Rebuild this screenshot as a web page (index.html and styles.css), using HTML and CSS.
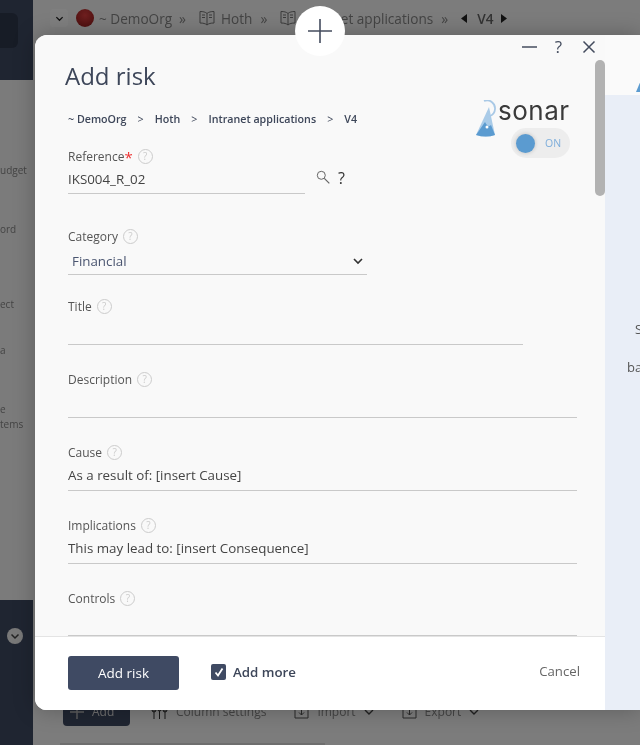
FILE: index.html
```html
<!DOCTYPE html>
<html lang="en">
<head>
<meta charset="utf-8">
<title>Add risk</title>
<link rel="stylesheet" href="styles.css">
</head>
<body>
<div class="page">
  <aside class="sidebar">
    <div class="side-top"><div class="side-block"></div></div>
    <div class="side-menu">
      <span class="m1">udget</span>
      <span class="m2">ord</span>
      <span class="m3">ect</span>
      <span class="m4">a</span>
      <span class="m5">e</span>
      <span class="m6">tems</span>
    </div>
    <div class="side-bottom"><span class="side-round"><svg width="10" height="10" viewBox="0 0 10 10"><path d="M1.500 3.500 5 7l3.500-3.500" fill="none" stroke="#444" stroke-width="1.500"/></svg></span></div>
  </aside>
  <main class="content">
    <nav class="path">
      <span class="path-btn"><svg width="9" height="9" viewBox="0 0 10 10"><path d="M1.500 3.500 5 7l3.500-3.500" fill="none" stroke="#222" stroke-width="1.400"/></svg></span>
      <span class="avatar"></span>
      <span>~ DemoOrg</span><span class="sep sep-first">»</span>
      <svg class="book" width="16" height="16" viewBox="0 0 16 16"><path d="M8 3.500C6.500 2 4 1.500 1 1.500v11.500c3 0 5.500 .5 7 2 1.500-1.500 4-2 7-2V1.500c-3 0-5.500 .5-7 2zM8 3.500V15M3 5h3M3 7.500h3M10 5h3M10 7.500h3" fill="none" stroke="#777" stroke-width="1"/></svg>
      <span>Hoth</span><span class="sep">»</span>
      <svg class="book" width="16" height="16" viewBox="0 0 16 16"><path d="M8 3.500C6.500 2 4 1.500 1 1.500v11.500c3 0 5.500 .5 7 2 1.500-1.500 4-2 7-2V1.500c-3 0-5.500 .5-7 2zM8 3.500V15M3 5h3M3 7.500h3M10 5h3M10 7.500h3" fill="none" stroke="#777" stroke-width="1"/></svg>
      <span>Intranet applications</span><span class="sep">»</span>
      <svg class="tri-l" width="6" height="9" viewBox="0 0 6 9"><path d="M6 0v9L0 4.500z" fill="#222"/></svg>
      <b>V4</b>
      <svg class="tri-r" width="6" height="9" viewBox="0 0 6 9"><path d="M0 0v9l6-4.500z" fill="#222"/></svg>
    </nav>
    <div class="toolbar">
      <span class="add-btn"><svg width="14" height="14" viewBox="0 0 14 14"><path d="M7 0v14M0 7h14" stroke="#bbb" stroke-width="1.400"/></svg>Add</span>
      <span class="tool tool-first"><svg width="17" height="14" viewBox="0 0 17 14"><path d="M3 0v14M8.500 0v14M14 0v14" stroke="#333" stroke-width="1"/><circle cx="3" cy="5" r="2" fill="#888" stroke="#333"/><circle cx="8.500" cy="4" r="2" fill="#888" stroke="#333"/><circle cx="14" cy="5" r="2" fill="#888" stroke="#333"/></svg>Column settings</span>
      <span class="tool"><svg width="15" height="15" viewBox="0 0 15 15"><path d="M4 2H1v12h13V2h-3M7.500 4v7M5 8.500l2.500 2.500L10 8.500" fill="none" stroke="#555" stroke-width="1"/></svg>Import<svg width="10" height="6" viewBox="0 0 10 6"><path d="M1 1l4 4 4-4" fill="none" stroke="#444" stroke-width="1.400"/></svg></span>
      <span class="tool"><svg width="15" height="15" viewBox="0 0 15 15"><path d="M4 2H1v12h13V2h-3M7.500 4v7M5 8.500l2.500 2.500L10 8.500" fill="none" stroke="#555" stroke-width="1"/></svg>Export<svg width="10" height="6" viewBox="0 0 10 6"><path d="M1 1l4 4 4-4" fill="none" stroke="#444" stroke-width="1.400"/></svg></span>
    </div>
    <div class="table-edge"></div>
  </main>
</div>
<div class="scrim"></div>

<section class="modal">
  <div class="modal-main">
    <div class="win-controls">
      <svg class="win-min" width="15" height="16" viewBox="0 0 15 16"><path d="M0 8h15" stroke="#444c5e" stroke-width="1.600"/></svg>
      <span class="win-q">?</span>
      <svg width="14" height="14" viewBox="0 0 14 14"><path d="M1.500 1.500l11 11M12.500 1.500l-11 11" stroke="#444c5e" stroke-width="1.500"/></svg>
    </div>
    <div class="modal-body">
      <div class="top">
        <div class="top-left">
          <h1>Add risk</h1>
          <ol class="crumbs">
            <li>~ DemoOrg</li><li class="gt">&gt;</li><li>Hoth</li><li class="gt">&gt;</li><li>Intranet applications</li><li class="gt">&gt;</li><li>V4</li>
          </ol>
          <div class="field">
            <label>Reference<em>*</em><i class="help">?</i></label>
            <div class="ref-row">
              <div class="value short w-ref">IKS004_R_02</div>
              <svg class="search" width="14" height="14" viewBox="0 0 14 14"><circle cx="5.300" cy="5.300" r="4" fill="none" stroke="#666" stroke-width="1"/><path d="M8.300 8.300l5 5" stroke="#666" stroke-width="1.200"/></svg>
              <span class="ref-q">?</span>
            </div>
          </div>
        </div>
        <div class="brand">
          <div class="logo">
            <svg width="24" height="38" viewBox="0 0 24 38">
              <path d="M8 1a8 8 0 0 1 11 8a8 8 0 0 1-5 7" fill="none" stroke="#a9c9e6" stroke-width="1.800"/>
              <path d="M13 7 0 35q10 3 19 0z" fill="#a9cbe8"/>
              <path d="M9 22 0 35q10 3 19 0l-4-10q-3 3-6-3z" fill="#5b9bd0"/>
              <circle cx="11" cy="27" r="1.500" fill="#fff"/>
            </svg>
            <span class="logo-text">sonar</span>
          </div>
          <div class="toggle"><span class="knob"></span><span class="on">ON</span></div>
        </div>
      </div>

      <div class="field f-category">
        <label>Category<i class="help">?</i></label>
        <div class="value select w-cat"><span>Financial</span><svg width="12" height="12" viewBox="0 0 12 12"><path d="M2 4l4 4 4-4" fill="none" stroke="#333" stroke-width="1.600"/></svg></div>
      </div>
      <div class="field f-title">
        <label>Title<i class="help">?</i></label>
        <div class="value w-title"></div>
      </div>
      <div class="field f-next">
        <label>Description<i class="help">?</i></label>
        <div class="value"></div>
      </div>
      <div class="field f-next">
        <label>Cause<i class="help">?</i></label>
        <div class="value">As a result of: [insert Cause]</div>
      </div>
      <div class="field f-next">
        <label>Implications<i class="help">?</i></label>
        <div class="value">This may lead to: [insert Consequence]</div>
      </div>
      <div class="field f-next">
        <label>Controls<i class="help">?</i></label>
        <div class="value short"></div>
      </div>
    </div>
    <div class="scrollbar"></div>
    <footer class="modal-foot">
      <button class="primary" type="button">Add risk</button>
      <span class="check"><svg width="12" height="12" viewBox="0 0 12 12"><path d="M2.500 6.500 5 9.500l4.500-7" fill="none" stroke="#fff" stroke-width="1.800"/></svg></span>
      <span class="more">Add more</span>
      <span class="cancel">Cancel</span>
    </footer>
  </div>
  <div class="modal-side">
    <div class="side-head"><svg width="8" height="12" viewBox="0 0 8 12"><path d="M5 0 0 12h8z" fill="#5b9bd0"/></svg></div>
    <div class="side-panel">
      <span class="peek-s">S</span>
      <span class="peek-b">ba</span>
    </div>
  </div>
</section>

<div class="plus-tab"><svg width="24" height="24" viewBox="0 0 24 24"><path d="M12 0v24M0 12h24" stroke="#444c5e" stroke-width="1.600"/></svg></div>
</body>
</html>
```

FILE: styles.css
```css
* { box-sizing: border-box; }
html, body { margin: 0; height: 745px; overflow: hidden; }
body { font-family: "Open Sans", "Noto Sans", sans-serif; background: #fff; position: relative; filter: blur(.4px); }
.page { display: flex; height: 745px; }

.sidebar { width: 33px; display: flex; flex-direction: column; background: #f6f6f6; overflow: hidden; }
.side-top { height: 80px; background: #3f4a63; padding-top: 13px; flex: none; }
.side-block { width: 18px; height: 35px; background: #2f384c; border-radius: 0 6px 6px 0; }
.side-menu { flex: 1; display: flex; flex-direction: column; align-items: flex-start; font-size: 10px; line-height: 14px; color: #888; background: #f6f6f6; padding-top: 83px; }
.side-menu span { white-space: nowrap; display: block; flex: none; }
.m2 { margin-top: 45px; }
.m3 { margin-top: 61px; }
.m4 { margin-top: 32px; }
.m5 { margin-top: 45px; }
.m6 { margin-top: 1px; }
.side-bottom { height: 145px; flex: none; background: #3f4a63; padding: 28px 0 0 7px; }
.side-round { display: flex; width: 16px; height: 16px; border-radius: 50%; background: #f0f0f0; align-items: center; justify-content: center; }

.content { flex: 1; background: #f8f8f8; padding: 0 0 0 17px; display: flex; flex-direction: column; min-width: 0; }
.path { display: flex; align-items: center; height: 36px; font-size: 13.600px; color: #888; white-space: nowrap; }
.path-btn { width: 18px; height: 18px; background: #fff; border-radius: 4px; display: flex; align-items: center; justify-content: center; margin-right: 8px; }
.avatar { width: 18px; height: 18px; border-radius: 50%; background: radial-gradient(circle at 50% 35%, #e04040, #8e1a1a); margin-right: 5px; }
.sep { margin: 0 13px 0 8px; font-size: 14px; }
.sep-first { margin-left: 7px; }
.book { margin-right: 6px; }
.tri-l { margin: 0 10px 0 0; }
.tri-r { margin-left: 8px; }
.path b { font-weight: 600; color: #666; }
.toolbar { margin-top: auto; margin-bottom: 17px; display: flex; align-items: center; gap: 28px; font-size: 12px; color: #888; height: 26px; padding-left: 13px; white-space: nowrap; }
.add-btn { background: #3f4a63; color: #ddd; width: 67px; height: 26px; border-radius: 4px; display: flex; align-items: center; gap: 8px; padding: 0 0 3px 7px; }
.tool { display: flex; align-items: center; gap: 8px; margin-bottom: 3px; }
.tool-first { margin-left: -7px; }
.table-edge { height: 2px; width: 265px; margin-left: 10px; background: #ddd; }

.scrim { position: absolute; inset: 0; background: rgba(0, 0, 0, .5); }

.modal { position: absolute; left: 35px; top: 35px; width: 605px; height: 675px; display: flex; border-radius: 12px 0 0 12px; overflow: hidden; box-shadow: 0 0 22px rgba(0, 0, 0, .25); background: #fafafa; }
.modal-main { width: 570px; flex: none; display: flex; flex-direction: column; position: relative; background: #f9f9f9; }
.win-controls { position: absolute; top: 4px; right: 9px; display: flex; align-items: center; height: 16px; }
.win-min { margin-right: 18px; }
.win-q { font-size: 17px; color: #444c5e; margin-right: 20px; line-height: 16px; }

.modal-body { flex: 1; min-height: 0; overflow: hidden; padding: 24px 28px 0 33px; }
.top { display: flex; justify-content: space-between; }
.top-left { flex: 1; min-width: 0; }
h1 { margin: 0 0 0 -3px; font-size: 24px; line-height: 34px; font-weight: 500; color: #3d4659; }
.crumbs { list-style: none; display: flex; margin: 17px 0 0; padding: 0; font-size: 10.700px; line-height: 18px; font-weight: 600; color: #3d4659; }
.gt { margin: 0 11px; font-weight: 400; }

.field label { display: flex; align-items: center; height: 17px; font-size: 12px; color: #555; }
.field label em { color: #e33; font-style: normal; font-size: 15px; line-height: 10px; }
.help { display: block; width: 15px; height: 15px; margin-left: 5px; border: 1px solid #ccc; border-radius: 50%; font-size: 10px; line-height: 13px; text-align: center; font-style: normal; color: #ccc; }
.top-left .field { margin-top: 20px; }
.value { height: 30px; line-height: 29px; font-size: 13.350px; color: #444; border-bottom: 1px solid #c9c9c9; }
.value.short { height: 29px; }
.ref-row { display: flex; align-items: flex-start; }
.w-ref { width: 237px; flex: none; }
.search { margin: 5px 0 0 11px; }
.ref-q { margin-left: 8px; font-size: 16px; line-height: 26px; color: #333; }
.f-category { margin-top: 34px; }
.w-cat { width: 299px; display: flex; justify-content: space-between; align-items: center; padding: 3px 3px 0 4px; color: #4a5570; }
.f-title { margin-top: 23px; }
.w-title { width: 455px; }
.f-next { margin-top: 26px; }

.scrollbar { position: absolute; right: 0; top: 25px; width: 10px; height: 136px; border-radius: 5px; background: #b2b2b2; }

.modal-foot { height: 74px; flex: none; background: #fff; border-top: 1px solid #e4e4e4; display: flex; align-items: center; padding: 0 25px 0 33px; }
.primary { width: 111px; height: 34px; border: 0; border-radius: 3px; background: #3f4a63; color: #fff; font: 13.500px "Open Sans", sans-serif; padding: 0; margin-bottom: 1px; }
.check { width: 15px; height: 16px; margin: 0 0 3px 32px; background: #3f4a63; border-radius: 2px; display: flex; align-items: center; justify-content: center; }
.more { margin: 0 0 4px 7px; font-size: 13.300px; font-weight: 600; color: #3d4659; }
.cancel { margin: 0 0 5px auto; font-size: 13.200px; color: #666; }

.modal-side { flex: 1; display: flex; flex-direction: column; overflow: hidden; }
.side-head { height: 60px; background: #fafafa; padding: 45px 0 0 31px; overflow: hidden; }
.side-head svg { display: block; }
.side-panel { flex: 1; background: #e9eef7; font-size: 13px; color: #555; display: flex; flex-direction: column; align-items: flex-start; padding-top: 225px; }
.peek-s { margin-left: 30px; }
.peek-b { margin: 20px 0 0 22px; }

.brand { width: 94px; flex: none; margin: 43px 7px 0 0; display: flex; flex-direction: column; align-items: flex-end; height: 56px; }
.logo { display: flex; align-items: flex-start; width: 100%; height: 26px; }
.logo svg { flex: none; margin-top: -2px; margin-right: -2px; }
.logo-text { font-family: "Inter", sans-serif; font-size: 26px; line-height: 20px; letter-spacing: .5px; color: #3a3a3a; margin-top: -1px; }
.toggle { width: 59px; height: 30px; border-radius: 15px; background: #ededed; display: flex; align-items: center; padding-left: 5px; }
.knob { width: 19px; height: 19px; border-radius: 50%; background: #5b9bd0; box-shadow: 0 0 4px rgba(0, 0, 0, .2); }
.on { margin-left: 10px; font-size: 10.500px; color: #7eaedb; }

.plus-tab { position: absolute; left: 295px; top: 6px; width: 50px; height: 50px; border-radius: 50%; background: #fff; display: flex; align-items: center; justify-content: center; }
```
